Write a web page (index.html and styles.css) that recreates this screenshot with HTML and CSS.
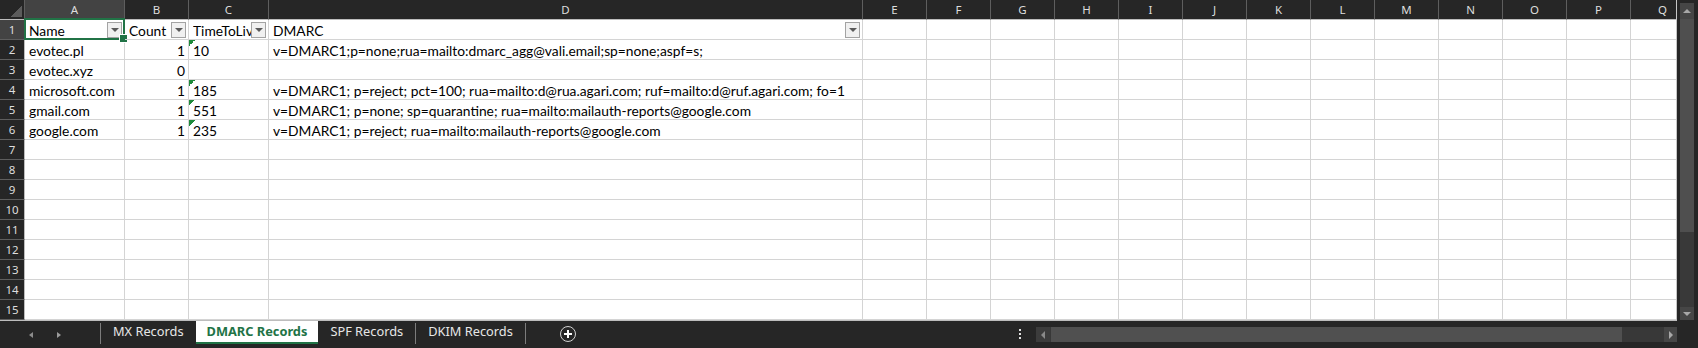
FILE: index.html
```html
<!DOCTYPE html>
<html lang="en">
<head>
  <meta charset="UTF-8">
  <title>DMARC Records</title>
  <link rel="stylesheet" href="styles.css">
</head>
<body>
  <div class="app">
    <div class="main">
      <div class="sheet-wrap">
        <div class="sheet" id="sheet"></div>
      </div>
      <div class="vscroll">
        <div class="sbtn up"></div>
        <div class="vthumb"></div>
        <div class="vtrack"></div>
        <div class="sbtn down"></div>
      </div>
    </div>

    <div class="tabbar">
      <div class="nav"><span class="tri left"></span><span class="tri right"></span></div>
      <span class="sep"></span>
      <div class="tab">MX Records</div>
      <div class="tab active">DMARC Records</div>
      <div class="tab">SPF Records</div>
      <span class="sep"></span>
      <div class="tab">DKIM Records</div>
      <span class="sep"></span>
      <div class="add">
        <svg width="18" height="18" viewBox="0 0 18 18">
          <circle cx="9" cy="9" r="7.5" fill="none" stroke="#d2d2d2" stroke-width="1"/>
          <path d="M9 5v8M5 9h8" stroke="#fff" stroke-width="2"/>
        </svg>
      </div>
      <div class="spacer"></div>
      <div class="more"><i></i><i></i><i></i></div>
      <div class="hscroll">
        <div class="sbtn left"></div>
        <div class="hthumb"></div>
        <div class="htrack"></div>
        <div class="sbtn right"></div>
      </div>
    </div>
  </div>

  <script>
    const cols = 'ABCDEFGHIJKLMNOPQ'.split('');
    const data = [
      ['Name', 'Count', 'TimeToLive', 'DMARC'],
      ['evotec.pl', '1', '10', 'v=DMARC1;p=none;rua=mailto:dmarc_agg@vali.email;sp=none;aspf=s;'],
      ['evotec.xyz', '0', '', ''],
      ['microsoft.com', '1', '185', 'v=DMARC1; p=reject; pct=100; rua=mailto:d@rua.agari.com; ruf=mailto:d@ruf.agari.com; fo=1'],
      ['gmail.com', '1', '551', 'v=DMARC1; p=none; sp=quarantine; rua=mailto:mailauth-reports@google.com'],
      ['google.com', '1', '235', 'v=DMARC1; p=reject; rua=mailto:mailauth-reports@google.com']
    ];
    const sheet = document.getElementById('sheet');

    function add(cls, text) {
      const el = document.createElement('div');
      el.className = cls;
      if (text) el.textContent = text;
      sheet.appendChild(el);
      return el;
    }

    add('corner');
    cols.forEach((c, i) => add(i === 0 ? 'colhead sel' : 'colhead', c));

    for (let r = 0; r < 15; r++) {
      add(r === 0 ? 'rowhead sel' : 'rowhead', String(r + 1));
      const row = data[r] || [];
      cols.forEach((c, i) => {
        const v = row[i] || '';
        // header row gets the autofilter buttons
        if (r === 0 && i < 4) {
          const el = add('cell hdr');
          el.innerHTML = `<span class="txt">${v}</span><span class="filter"></span>`;
          if (i === 0) el.insertAdjacentHTML('beforeend', '<span class="selbox"></span>');
          return;
        }
        let cls = 'cell';
        if (i === 1) cls += ' num';
        if (i === 2 && v) cls += ' flag';
        add(cls, v);
      });
    }
  </script>
</body>
</html>
```

FILE: styles.css
```css
* { box-sizing: border-box; }
body { margin: 0; background: #262626; font-family: "Noto Sans", sans-serif; overflow: hidden; }
.app { width: 1698px; height: 348px; display: flex; flex-direction: column; }
.main { display: flex; height: 321px; }

/* grid */
.sheet-wrap { width: 1677px; height: 321px; overflow: hidden; background: #fff; border-right: 1px solid #c6c6c6; border-bottom: 1px solid #bdbdbd; }
.sheet { display: grid; grid-template-columns: 25px 100px 64px 80px 594px repeat(13, 64px); grid-auto-rows: 20px; font-family: Lato, "Liberation Sans", sans-serif; font-size: 13.8px; color: #000; }
.corner { background: #262626 linear-gradient(135deg, transparent 50%, #5c5c5c 50%) no-repeat; background-size: 11px 11px; background-position: 11px 6px; border-right: 1px solid #5e5e5e; border-bottom: 1px solid #bdbdbd; }
.colhead { background: #262626; color: #dedede; font-family: "Noto Sans", sans-serif; font-size: 11.5px; line-height: 19px; text-align: center; border-right: 1px solid #5e5e5e; border-bottom: 1px solid #bdbdbd; }
.rowhead { background: #262626; color: #dedede; font-family: "Noto Sans", sans-serif; font-size: 11.5px; line-height: 19px; text-align: center; border-right: 1px solid #bdbdbd; border-bottom: 1px solid #5e5e5e; }
.colhead.sel, .rowhead.sel { background: #434343; }

.cell { border-right: 1px solid #d4d4d4; border-bottom: 1px solid #d4d4d4; padding: 1px 3px 0 4px; line-height: 19px; white-space: nowrap; }
.cell.num { text-align: right; }
.cell.flag { background: linear-gradient(135deg, #1f8a3b 50%, transparent 50%) no-repeat; background-size: 6px 6px; }

.hdr { display: flex; align-items: center; padding: 0 2px 0 4px; position: relative; }
.hdr .txt { flex: 1; min-width: 0; overflow: hidden; padding-top: 1px; }
.filter { flex: none; width: 15px; height: 16px; border: 1px solid #a3a3a3; background: #f0f0f0; display: flex; align-items: center; justify-content: center; }
.filter::after { content: ""; border-left: 4px solid transparent; border-right: 4px solid transparent; border-top: 4px solid #5a5a5a; }
.selbox { position: absolute; left: -1px; top: -2px; right: -1px; bottom: -1px; border: 2px solid #217346; pointer-events: none; }
.selbox::after { content: ""; position: absolute; right: -5px; bottom: -5px; width: 7px; height: 7px; background: #217346; border: 1px solid #fff; }

/* vertical scrollbar */
.vscroll { flex: 1; display: flex; flex-direction: column; padding: 3px 4px 1px 3px; }
.vthumb { height: 213px; background: #4f4f4f; }
.vtrack { flex: 1; background: #393939; }
.sbtn { background: #464646; display: flex; align-items: center; justify-content: center; flex: none; }
.sbtn.up { height: 16px; }
.sbtn.down { height: 13px; }
.sbtn::after { content: ""; }
.sbtn.up::after { border-left: 4px solid transparent; border-right: 4px solid transparent; border-bottom: 4px solid #a8a8a8; }
.sbtn.down::after { border-left: 4px solid transparent; border-right: 4px solid transparent; border-top: 4px solid #a8a8a8; }
.sbtn.left { width: 14px; background: #3c3c3c; }
.sbtn.right { width: 13px; }
.sbtn.left::after { border-top: 4px solid transparent; border-bottom: 4px solid transparent; border-right: 4px solid #8a8a8a; }
.sbtn.right::after { border-top: 4px solid transparent; border-bottom: 4px solid transparent; border-left: 4px solid #a8a8a8; }

/* sheet tabs */
.tabbar { flex: 1; display: flex; align-items: stretch; padding-right: 21px; color: #e6e6e6; font-size: 12.8px; }
.nav { width: 100px; display: flex; align-items: center; padding-left: 29px; gap: 24px; }
.tri { width: 0; height: 0; border-top: 3.5px solid transparent; border-bottom: 3.5px solid transparent; }
.tri.left { border-right: 4px solid #8c8c8c; }
.tri.right { border-left: 4px solid #9c9c9c; }
.sep { width: 1px; background: #7c7c7c; margin: 2px 0 4px; }
.tab { padding: 0 12px; line-height: 21px; white-space: nowrap; }
.tab.active { background: #fff; color: #217346; font-weight: bold; padding: 0 11px; border-bottom: 2px solid #217346; margin-bottom: 4px; line-height: 21px; }
.add { margin-left: 33px; display: flex; align-items: center; padding-bottom: 2px; }
.spacer { flex: 1; }
.more { width: 16px; margin-right: 8px; display: flex; flex-direction: column; align-items: center; justify-content: center; gap: 2px; padding-bottom: 2px; }
.more i { width: 2px; height: 2px; background: #e0e0e0; }
.hscroll { width: 641px; height: 15px; margin-top: 6px; display: flex; background: #383838; }
.hthumb { width: 571px; background: #505050; margin-left: 1px; }
.htrack { flex: 1; }
```
